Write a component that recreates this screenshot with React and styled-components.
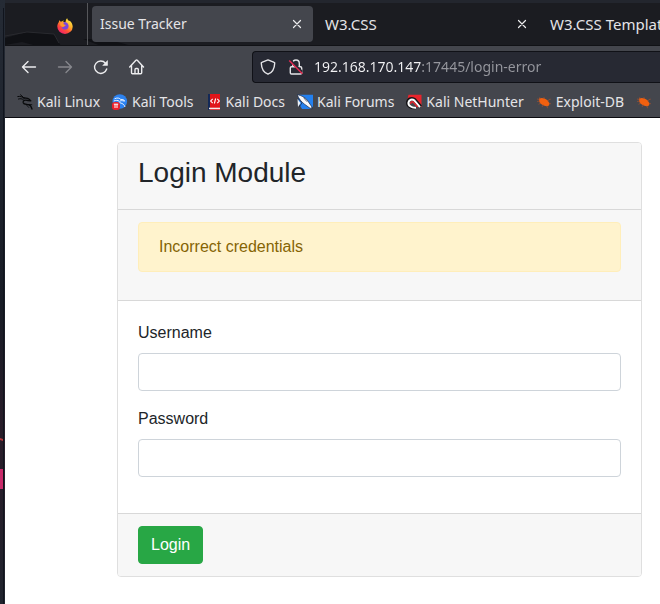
import React from "react";
import styled, { createGlobalStyle } from "styled-components";

const GlobalStyle = createGlobalStyle`
  *, *::before, *::after { box-sizing: border-box; }
  body { margin: 0; background: #1b1e27; }
  button, input { font: inherit; }
`;

const Desktop = styled.div`
  display: flex;
  min-height: 100vh;
  overflow: hidden;
  background: #1b1e27;
`;
const Wallpaper = styled.svg`
  flex: none;
  width: 5px;
  height: 604px;
`;
const Window = styled.div`
  flex: 1;
  min-width: 0;
  display: flex;
  flex-direction: column;
  border-top: 3px solid #23262e;
  background: #ffffff;
`;

const Chrome = styled.header`
  font: 14px/20px "Noto Sans", sans-serif;
  color: #e4e4e7;
  background: #44464d;
  border-bottom: 1px solid #0b0b10;
  overflow: hidden;
`;
const TabStrip = styled.div`
  position: relative;
  display: flex;
  height: 43px;
  padding-top: 3px;
  background: #1b1c21;
  border-bottom: 1px solid #111216;
`;
const TabArt = styled.svg`
  position: absolute;
  left: 0;
  top: 0;
  width: 220px;
  height: 42px;
`;
const PinnedTab = styled.button`
  position: relative;
  flex: none;
  width: 83px;
  margin: -4px 4px 0 0;
  padding: 4px 14px 0 0;
  display: flex;
  align-items: center;
  justify-content: flex-end;
  border: 0;
  border-right: 1px solid #56575b;
  background: none;
`;
const Tab = styled.div`
  position: relative;
  flex: none;
  display: flex;
  align-items: center;
  width: 221px;
  height: 36px;
  margin-right: 4px;
  padding: 0 8px;
  border-radius: 4px;
  font-size: ${(p) => (p.$active ? 14 : 15)}px;
  background: ${(p) => (p.$active ? "#44464d" : "transparent")};
`;
const TabLabel = styled.button`
  flex: 1;
  padding: 0;
  border: 0;
  background: none;
  color: inherit;
  text-align: left;
  white-space: nowrap;
`;
const IconButton = styled.button`
  flex: none;
  display: flex;
  align-items: center;
  justify-content: center;
  width: ${(p) => p.$size}px;
  height: ${(p) => p.$size}px;
  padding: 0;
  border: 0;
  background: none;
  color: ${(p) => (p.disabled ? "#86878c" : "#ececee")};
`;

const NavBar = styled.div`
  display: flex;
  align-items: center;
  height: 41px;
  padding-left: 6px;
`;
const AddressBar = styled.label`
  flex: 1;
  display: flex;
  align-items: center;
  gap: 12px;
  height: 32px;
  margin-left: 97px;
  padding-left: 7px;
  border: 1px solid #101117;
  border-right: 0;
  border-radius: 4px 0 0 4px;
  background: #272933;
`;
const AddressInput = styled.input`
  flex: 1;
  min-width: 0;
  height: 20px;
  margin-left: -2px;
  padding: 0;
  border: 0;
  outline: 0;
  color: transparent;
  background: linear-gradient(90deg, #f3f3f5 107px, #96979e 107px);
  background-clip: text;
  -webkit-background-clip: text;
`;
const BookmarkBar = styled.nav`
  display: flex;
  align-items: center;
  gap: 12px;
  height: 30px;
  padding-left: 12px;
`;
const Bookmark = styled.a`
  flex: none;
  display: flex;
  align-items: center;
  gap: 4px;
  color: inherit;
  text-decoration: none;
  white-space: nowrap;
`;
const Glyph = styled.svg`
  flex: none;
  display: block;
  width: 16px;
  height: 16px;
`;

const Page = styled.main`
  flex: 1;
  padding: 24px 18px 24px 112px;
  font: 16px/24px "Liberation Sans", Arial, sans-serif;
  color: #212529;
`;
const Card = styled.form`
  border: 1px solid #dfdfdf;
  border-radius: 4px;
  overflow: hidden;
`;
const CardHeader = styled.div`
  padding: 12px 20px;
  background: #f7f7f7;
  border-bottom: 1px solid #d8d8d8;
`;
const Title = styled.h3`
  margin: 0 0 6px;
  font-size: 28px;
  line-height: 36px;
  font-weight: 400;
`;
const Alert = styled.div`
  margin-bottom: 16px;
  padding: 12px 20px;
  border: 1px solid #ffeeba;
  border-radius: 4px;
  background: #fff3cd;
  color: #856404;
`;
const CardBody = styled.div`
  padding: 20px;
`;
const Field = styled.div`
  margin-bottom: 16px;
`;
const FieldLabel = styled.label`
  display: block;
  margin-bottom: 8px;
`;
const TextInput = styled.input`
  display: block;
  width: 100%;
  height: 38px;
  padding: 6px 12px;
  border: 1px solid #ced4da;
  border-radius: 4px;
  background: #ffffff;
  color: #495057;
`;
const CardFooter = styled.div`
  padding: 12px 20px;
  background: #f7f7f7;
  border-top: 1px solid #d8d8d8;
`;
const SubmitButton = styled.button`
  display: block;
  padding: 6px 12px;
  border: 1px solid #28a745;
  border-radius: 4px;
  background: #28a745;
  color: #ffffff;
`;

const line = {
  fill: "none",
  stroke: "currentColor",
  strokeWidth: 1.4,
  strokeLinecap: "round",
  strokeLinejoin: "round",
};

const FirefoxIcon = () => (
  <Glyph viewBox="0 0 16 16" aria-hidden="true">
    <defs>
      <linearGradient id="flame" x1="0.85" y1="0.05" x2="0.2" y2="1">
        <stop offset="0" stopColor="#fff04a" />
        <stop offset="0.35" stopColor="#ffb02b" />
        <stop offset="0.65" stopColor="#ff5034" />
        <stop offset="1" stopColor="#ee1777" />
      </linearGradient>
    </defs>
    <path d="M10.2.3c.3 1.4 1.2 2 2 2.9 0-.3.1-.6 0-.8 2 1.2 3.500 3.700 3.500 6.300A7.700 7.300 0 0 1 .3 8.600C.3 6.300 1.300 4.800 1.900 4c0-.6.1-1.200.4-1.800.5.3.8.8 1 1.300.5-.1 1.100-.1 1.700 0C5.500 2.800 6.300 2.500 7 2.500c-.5.400-.7.900-.8 1.400 1 .1 2 .1 2.300.6C8.700 2.800 9 1.200 10.200.3Z" fill="url(#flame)" />
    <path d="M6.200 4.200c1.700-.5 4.700.3 5.300 3 .5 2.500-1.300 4.400-3.400 4.400-2 0-3.500-1.300-3.600-2.700.9.500 2 .3 2.700-.4.400-.4 1.400-.5 1.500-1C8.400 7 7.300 6.900 6.500 6.500c-.3-.8-.2-1.400.3-1.900Z" fill="#7b45dc" />
    <path d="M3.300 5.200c1-.9 2.500-.9 3.500-.6-.5.400-.6 1-.5 1.600.8.500 2 .4 2.200.9 0 .5-1 .7-1.400 1.100-.6.600-1.500.8-2.500.3C3.500 7.900 3 6.500 3.300 5.200Z" fill="#ff9a2e" />
  </Glyph>
);
const CloseIcon = () => (
  <Glyph viewBox="0 0 16 16" aria-hidden="true">
    <path d="m4.500 4.500 7 7m0-7-7 7" {...line} strokeWidth="1.200" />
  </Glyph>
);
const BackIcon = () => (
  <Glyph viewBox="0 0 16 16" aria-hidden="true">
    <path d="M14.500 8H1.500M7 2.500 1.500 8 7 13.500" {...line} />
  </Glyph>
);
const ForwardIcon = () => (
  <Glyph viewBox="0 0 16 16" aria-hidden="true">
    <path d="M1.500 8h13M9 2.500 14.500 8 9 13.500" {...line} />
  </Glyph>
);
const ReloadIcon = () => (
  <Glyph viewBox="0 0 16 16" aria-hidden="true">
    <path d="M13.700 10A6.200 6.200 0 1 1 12.500 4.200" {...line} />
    <path d="M14.800 1v5.200a.5.500 0 0 1-.5.500H9.200Z" fill="currentColor" />
  </Glyph>
);
const HomeIcon = () => (
  <Glyph viewBox="0 0 16 16" aria-hidden="true">
    <path d="M.7 8 6.900 1.300q.7-.6 1.400 0L14.500 8M2.500 6.500v7.300q0 1 1 1h8.200q1 0 1-1V6.500M6 14.500v-4q0-1 1-1h1.300q1 0 1 1v4" {...line} />
  </Glyph>
);
const ShieldIcon = () => (
  <Glyph viewBox="0 0 16 16" aria-hidden="true">
    <path d="M8 .9 14.200 3.300q.6.200.5.900C14.500 9.500 12.500 13.500 8 15.200 3.500 13.500 1.500 9.500 1.300 4.200q-.1-.7.5-.9Z" {...line} />
  </Glyph>
);
const InsecureIcon = () => (
  <Glyph viewBox="0 0 16 16" aria-hidden="true">
    <path d="M4.700 6.500V4.300a3.300 3.300 0 0 1 6.600 0v3.200M3.500 7.800h9q1.200 0 1.200 1.200v4.800q0 1.200-1.200 1.200h-9q-1.200 0-1.200-1.200V9q0-1.200 1.200-1.200Z" {...line} />
    <path d="m3 2 11 11" fill="none" stroke="#272933" strokeWidth="2.500" />
    <path d="m1.200 1.500 13.200 13.200" fill="none" stroke="#e22850" strokeWidth="1.500" />
  </Glyph>
);
const DragonIcon = () => (
  <Glyph viewBox="0 0 16 16" aria-hidden="true">
    <g fill="none" stroke="#08090b" strokeLinecap="round" strokeLinejoin="round">
      <path d="M.8 2.500c2.500-.4 4.500.3 6.200 1.700M1.500 5c1.700-.6 3.300-.3 4.700.5M3.500.8 6 3" strokeWidth="1" />
      <path d="M6.500 3.600c1.500.9 3.300.3 5 1.200l2.300 2-2.800-.3C8 5.800 5.700 6.300 6.200 8.700c.6 1.900 3 1.500 5.200 2 2.100.5 3 2 3.600 4.300" strokeWidth="1.300" />
      <path d="m12.500 10.500 2.300.2M9.500 11l2.300 2.500" strokeWidth=".8" />
    </g>
  </Glyph>
);
const ToolsIcon = () => (
  <Glyph viewBox="0 0 16 16" aria-hidden="true">
    <circle cx="7.800" cy="7.500" r="7.300" fill="#2c82f0" />
    <path d="M2.500 4.800c3-1.500 5.200-.6 6.300.7 2-.3 3 .3 4 1.600l-2.500-.4c-1.500-.2-3 .2-2.600 1.600.4 1.300 4 .4 5.300 4.700M1.800 7c2-.9 4-.8 5.300.2" fill="none" stroke="#fff" strokeWidth=".9" />
    <rect x="0" y="8" width="8" height="8" rx="3" fill="#ec202b" />
    <path d="M1.800 10.200h4.400M3 10.200v3.800m2-3.800V14" fill="none" stroke="#fff" strokeWidth="1" />
  </Glyph>
);
const DocsIcon = () => (
  <Glyph viewBox="0 0 16 16" aria-hidden="true">
    <path d="M2 0h12v16H2Z" fill="#e11419" />
    <path d="M2 0h2v16H2Z" fill="#142957" />
    <path d="M3 13.700h11v1.500H3Z" fill="#f4e9e8" />
    <path d="m6.700 4.800-2 2.200 2 2.200m4.600-4.400 2 2.200-2 2.200M9.600 4.500 8.400 9.500" fill="none" stroke="#fff" strokeWidth="1.100" />
  </Glyph>
);
const ForumsIcon = () => (
  <Glyph viewBox="0 0 16 16" aria-hidden="true">
    <path d="M1.500.8H16v11.700L13 15H5L1.500 9Z" fill="#2380ef" />
    <path d="M0 .5c5 1.200 8.700 3 10.700 6.300l3.800 5.500.5 2.700-2.700-1.300-4.800-3.500C4.500 8 2 5 0 .5Z" fill="#f5f8fb" stroke="#14233f" strokeWidth=".7" />
    <path d="m1 4.200 4 4.600L2.200 13M6.500 3.500 10 7.700" fill="none" stroke="#17233c" strokeWidth=".7" />
    <path d="m.5 5 3 4-2.500 4Z" fill="#edf2f8" />
  </Glyph>
);
const HunterIcon = () => (
  <Glyph viewBox="0 0 16 16" aria-hidden="true">
    <path d="M2.500.8H15.500v12.500L11 9 7 3.500 1 7Z" fill="#e8242c" />
    <path d="M9.500 13.700C5 14.500.8 11.500 1.500 8 2.300 4.300 6.500 3.500 9 5.700l5.800 6.800" fill="none" stroke="#141417" strokeWidth="3" />
    <path d="M10 13.700C5.500 14 2 11.500 2.500 8.300c.5-2.800 3.700-3.600 6-1.700l5.500 6.500" fill="none" stroke="#fff" strokeWidth="2" />
    <path d="M5 10c-1-2 1-3 2.700-1.500l4 4.500" fill="none" stroke="#e8242c" strokeWidth="1.500" />
  </Glyph>
);
const BugIcon = () => (
  <Glyph viewBox="0 0 16 16" aria-hidden="true">
    <path d="M3 4.500C6 3 9.500 4.700 11.700 6.500l1.700 2.700c.2 2-.9 3-2.700 3C7.500 12 4.500 10 3.300 8Z" fill="#f0600f" />
    <path d="M5 5 3.500 3.200M8.500 5l-.7-2M11.500 7l2.500-2 .8.300M4 7 1 7.500M5 9l-2.500 1.300M7.500 10.500 6 13M11 11.700l.5 2.500M13 9.300l2 .5M3.500 5.500 1 5" fill="none" stroke="#b4532a" strokeWidth=".6" />
  </Glyph>
);

const bookmarks = [
  ["Kali Linux", DragonIcon],
  ["Kali Tools", ToolsIcon],
  ["Kali Docs", DocsIcon],
  ["Kali Forums", ForumsIcon],
  ["Kali NetHunter", HunterIcon],
  ["Exploit-DB", BugIcon],
  ["", BugIcon],
];
const tabs = ["Issue Tracker", "W3.CSS", "W3.CSS Templates"];

export default function App() {
  return (
    <>
      <GlobalStyle />
      <Desktop>
        <Wallpaper viewBox="0 0 5 604" preserveAspectRatio="none" aria-hidden="true">
          <defs>
            <linearGradient id="night" x1="0" y1="0" x2="0" y2="1">
              <stop offset="0" stopColor="#252b35" />
              <stop offset=".5" stopColor="#181c26" />
              <stop offset=".72" stopColor="#291d2a" />
              <stop offset=".82" stopColor="#261e2a" />
              <stop offset="1" stopColor="#20242e" />
            </linearGradient>
          </defs>
          <path d="M0 0h5v604H0Z" fill="url(#night)" />
          <path d="m0 438 3 1v2l-3-1Z" fill="#b6383c" />
          <path d="M0 469h3v20H0Z" fill="#c82a69" />
          <path d="M3 8h1v596H3Z" fill="#10141d" />
        </Wallpaper>
        <Window>
          <Chrome>
            <TabStrip>
              <TabArt viewBox="0 0 220 42" aria-hidden="true">
                <path d="M0 35 22 29l27 2 7 12H32l-15-4-17 3Z" fill="#101115" />
                <path d="m0 33 22-4 27 2 5 9" fill="none" stroke="#292a2f" />
                <path d="M78 36q27-1 48 7H96Z" fill="#101115" />
              </TabArt>
              <PinnedTab type="button" aria-label="Firefox View">
                <FirefoxIcon />
              </PinnedTab>
              {tabs.map((name, i) => (
                <Tab key={name} $active={i === 0}>
                  <TabLabel type="button">{name}</TabLabel>
                  <IconButton type="button" $size={16} aria-label={`Close ${name}`}>
                    <CloseIcon />
                  </IconButton>
                </Tab>
              ))}
            </TabStrip>
            <NavBar>
              <IconButton type="button" $size={36} aria-label="Back"><BackIcon /></IconButton>
              <IconButton type="button" $size={36} aria-label="Forward" disabled><ForwardIcon /></IconButton>
              <IconButton type="button" $size={36} aria-label="Reload"><ReloadIcon /></IconButton>
              <IconButton type="button" $size={36} aria-label="Home"><HomeIcon /></IconButton>
              <AddressBar>
                <ShieldIcon />
                <InsecureIcon />
                <AddressInput aria-label="Address" defaultValue="192.168.170.147:17445/login-error" />
              </AddressBar>
            </NavBar>
            <BookmarkBar>
              {bookmarks.map(([name, Icon], i) => (
                <Bookmark key={i} href="#" aria-label={name || "Bookmark"}>
                  <Icon />
                  {name}
                </Bookmark>
              ))}
            </BookmarkBar>
          </Chrome>
          <Page>
            <Card onSubmit={(e) => e.preventDefault()}>
              <CardHeader>
                <Title>Login Module</Title>
              </CardHeader>
              <CardHeader>
                <Alert role="alert">Incorrect credentials</Alert>
              </CardHeader>
              <CardBody>
                <Field>
                  <FieldLabel htmlFor="username">Username</FieldLabel>
                  <TextInput id="username" type="text" />
                </Field>
                <Field>
                  <FieldLabel htmlFor="password">Password</FieldLabel>
                  <TextInput id="password" type="password" />
                </Field>
              </CardBody>
              <CardFooter>
                <SubmitButton type="submit">Login</SubmitButton>
              </CardFooter>
            </Card>
          </Page>
        </Window>
      </Desktop>
    </>
  );
}
